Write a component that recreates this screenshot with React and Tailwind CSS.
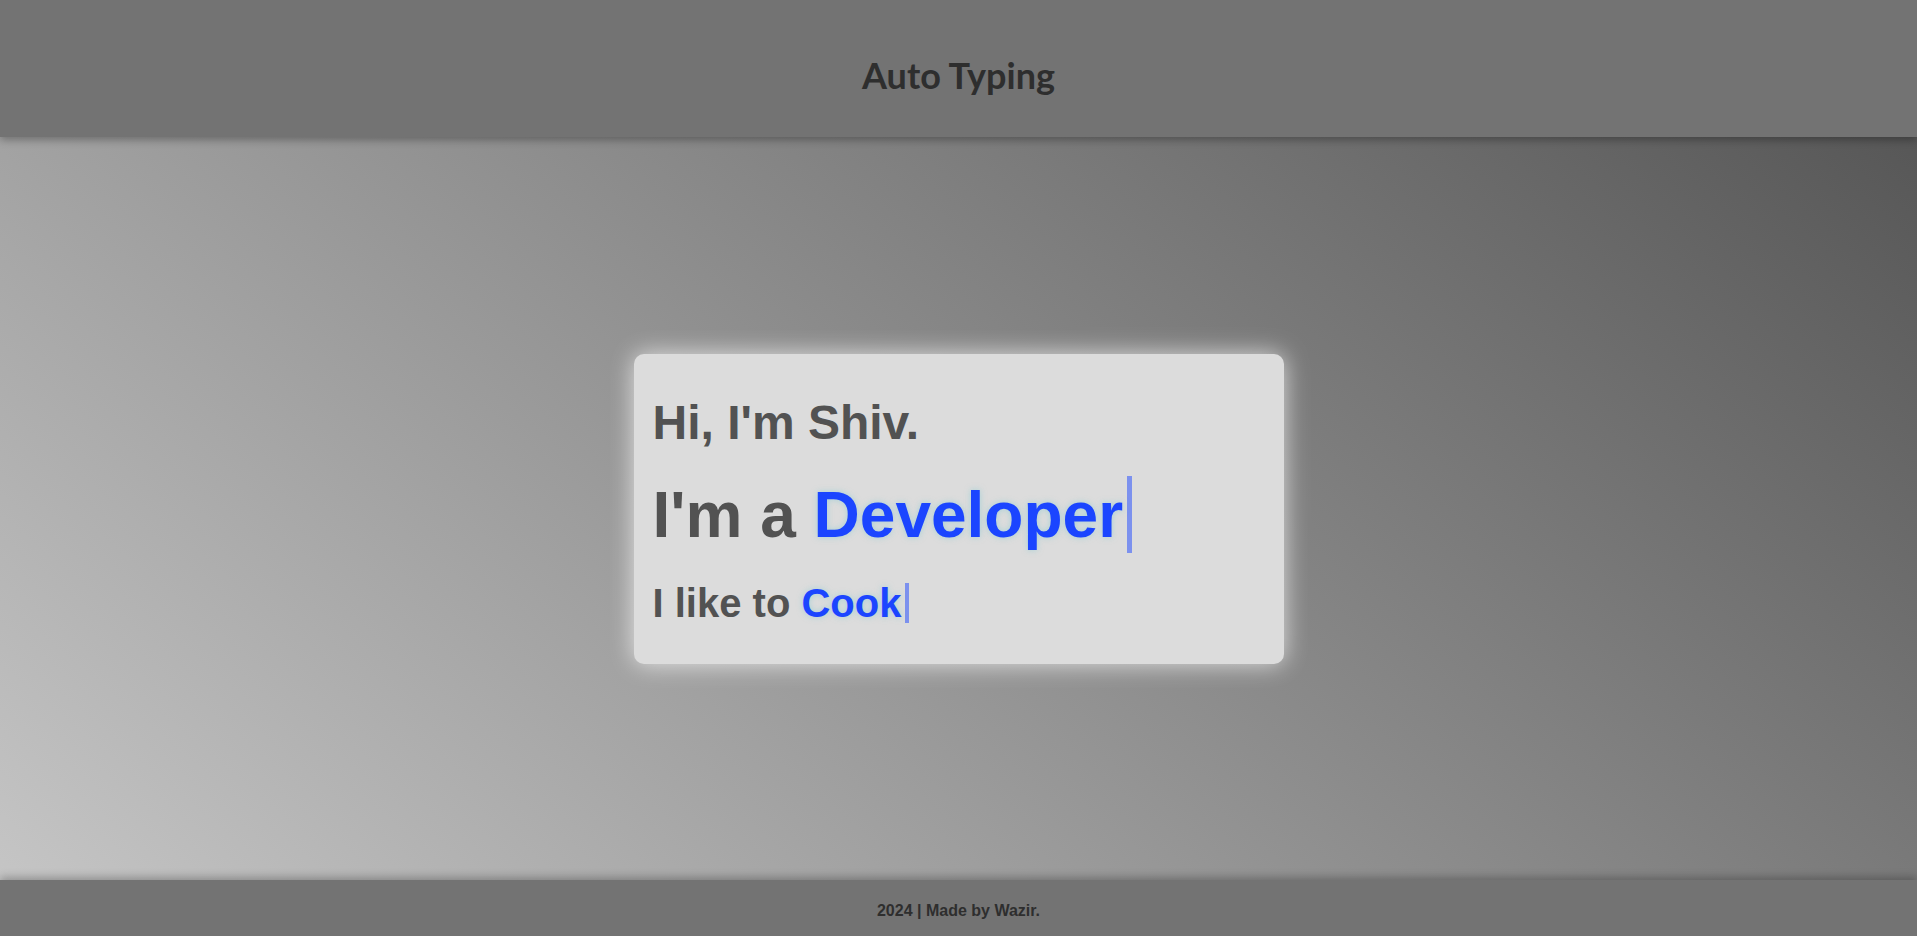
export default function App() {
  const glow = { textShadow: "0 0 6px rgba(120, 200, 210, 0.55)" };
  return (
    <div className="flex flex-col h-screen w-full overflow-hidden font-['Liberation_Sans',Arial,sans-serif]">
      <header className="relative z-10 h-[137px] shrink-0 bg-[#737373] shadow-[0_3px_8px_rgba(0,0,0,0.3)] flex justify-center pt-[57px]">
        <h1 className="text-[36px] leading-none font-bold text-[#2e2e2e] font-['Comic_Sans_MS','Lato',sans-serif]">
          Auto Typing
        </h1>
      </header>
      <main className="flex-1 flex items-center justify-center bg-[linear-gradient(40deg,#c5c5c5,#575757)]">
        <div className="w-[650px] bg-[#dcdcdc] rounded-[10px] shadow-[0_0_24px_rgba(255,255,255,0.75)] pt-[45px] pb-[41px] px-[19px] flex flex-col gap-[36px] font-bold text-[#525252]">
          <div className="text-[48px] leading-none">Hi, I'm Shiv.</div>
          <div className="text-[64px] leading-none whitespace-nowrap">
            I'm a <span className="text-[#1b45ff]" style={glow}>Developer</span>
            <span className="inline-block w-[5px] h-[77px] ml-[4px] -my-[10px] align-[-6px] bg-[#1b45ff]/50"></span>
          </div>
          <div className="text-[40px] leading-none whitespace-nowrap">
            I like to <span className="text-[#1b45ff]" style={glow}>Cook</span>
            <span className="inline-block w-[4px] h-[40px] ml-[4px] -my-[2px] align-[-4px] bg-[#1b45ff]/50"></span>
          </div>
        </div>
      </main>
      <footer className="relative z-10 h-[56px] shrink-0 bg-[#737373] shadow-[0_-3px_8px_rgba(0,0,0,0.25)] flex justify-center pt-[23px]">
        <p className="text-[16px] leading-none font-bold text-[#2e2e2e]">2024 | Made by Wazir.</p>
      </footer>
    </div>
  );
}
